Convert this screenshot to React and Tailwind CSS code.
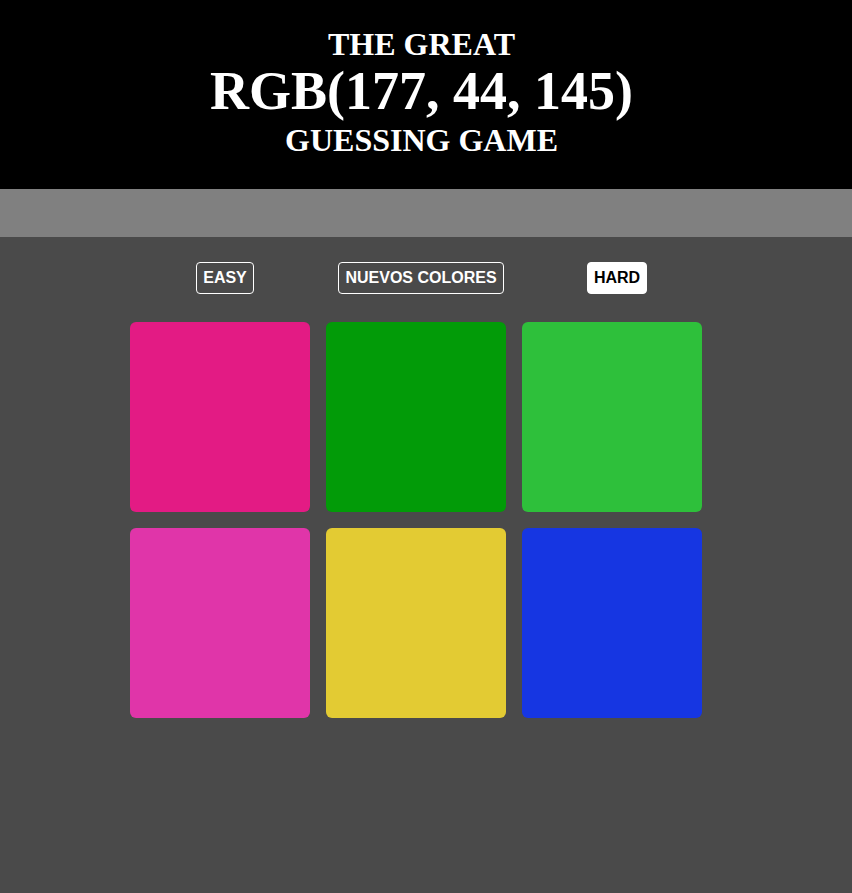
const squares = [
  '#e31b84',
  '#029b08',
  '#2ec03b',
  '#e035a9',
  '#e3cb33',
  '#1636e2',
]

function ModeButton({ label, active }) {
  return (
    <button
      className={
        'rounded border border-white px-[6px] py-[6px] text-[16px] leading-[18px] font-bold uppercase ' +
        (active ? 'bg-white text-black' : 'bg-transparent text-white')
      }
      style={{ fontFamily: '"Liberation Sans", Arial, sans-serif' }}
    >
      {label}
    </button>
  )
}

export default function App() {
  return (
    <div className="min-h-screen bg-[#4a4a4a]">
      {/* Header */}
      <header
        className="bg-black pt-[26px] pb-[29px] pr-[9px] text-center font-bold text-white"
        style={{ fontFamily: '"Liberation Serif", "Times New Roman", serif' }}
      >
        <div className="text-[32px] leading-[36px]">THE GREAT</div>
        <div className="text-[54px] leading-[58px]">RGB(177, 44, 145)</div>
        <div className="text-[32px] leading-[40px]">GUESSING GAME</div>
      </header>

      {/* Status bar */}
      <div className="h-[48px] bg-[#808080]" />

      {/* Controls + board */}
      <main className="mx-auto w-[600px] pl-[4px] pr-[24px] pt-[25px]">
        <div className="grid grid-cols-3 gap-4">
          <div className="flex justify-center pl-[10px]">
            <ModeButton label="Easy" />
          </div>
          <div className="flex justify-center pl-[10px]">
            <ModeButton label="Nuevos colores" />
          </div>
          <div className="flex justify-center pl-[10px]">
            <ModeButton label="Hard" active />
          </div>
        </div>

        <div className="mt-[28px] grid grid-cols-3 gap-4">
          {squares.map((c, i) => (
            <div key={i} className="h-[190px] rounded-md" style={{ backgroundColor: c }} />
          ))}
        </div>
      </main>
    </div>
  )
}
